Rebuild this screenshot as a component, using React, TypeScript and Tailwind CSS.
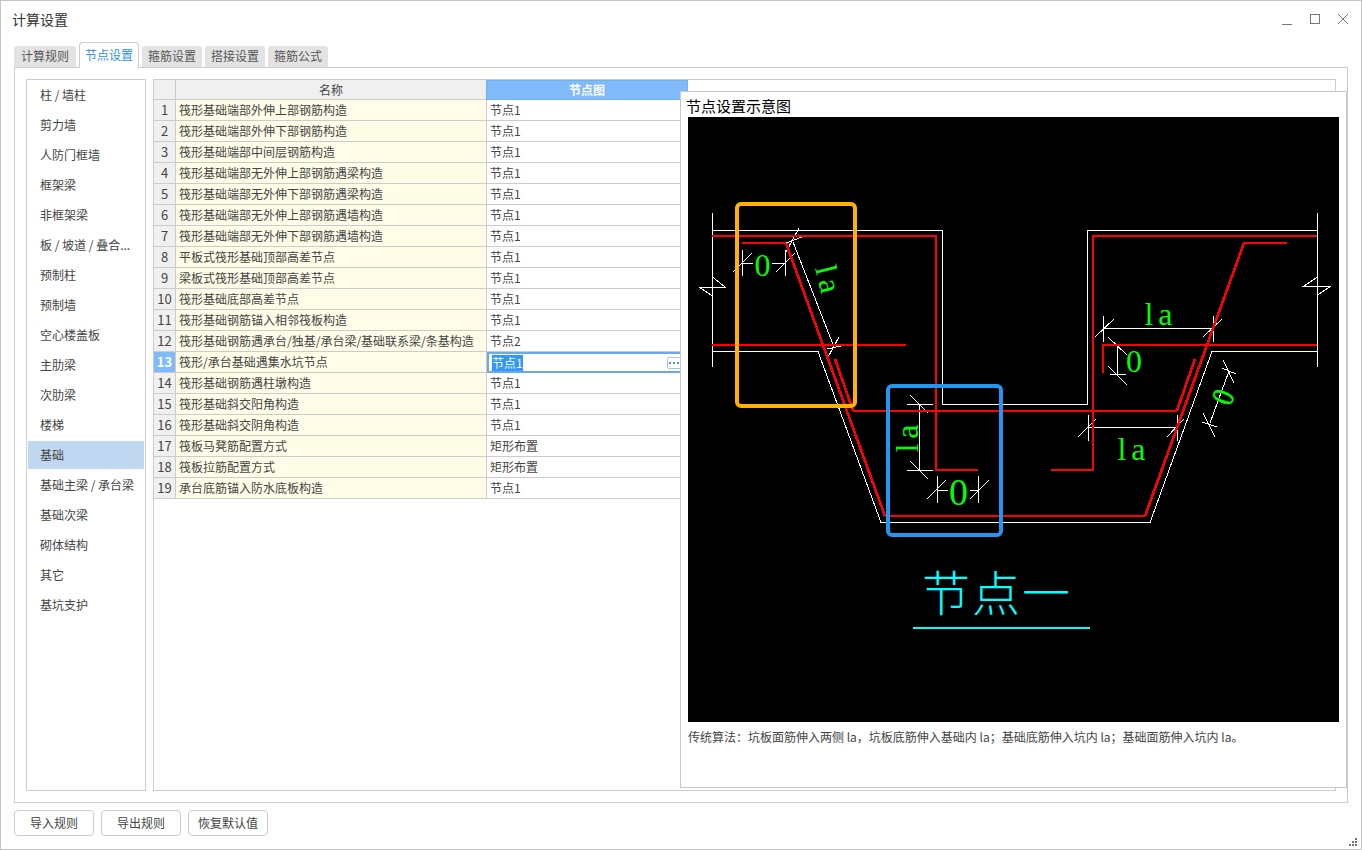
import React from 'react';

const categories = [
  '柱 / 墙柱', '剪力墙', '人防门框墙', '框架梁', '非框架梁', '板 / 坡道 / 叠合...', '预制柱', '预制墙', '空心楼盖板', '主肋梁',
  '次肋梁', '楼梯', '基础', '基础主梁 / 承台梁', '基础次梁', '砌体结构', '其它', '基坑支护',
];

const rows = [
  ['筏形基础端部外伸上部钢筋构造', '节点1'],
  ['筏形基础端部外伸下部钢筋构造', '节点1'],
  ['筏形基础端部中间层钢筋构造', '节点1'],
  ['筏形基础端部无外伸上部钢筋遇梁构造', '节点1'],
  ['筏形基础端部无外伸下部钢筋遇梁构造', '节点1'],
  ['筏形基础端部无外伸上部钢筋遇墙构造', '节点1'],
  ['筏形基础端部无外伸下部钢筋遇墙构造', '节点1'],
  ['平板式筏形基础顶部高差节点', '节点1'],
  ['梁板式筏形基础顶部高差节点', '节点1'],
  ['筏形基础底部高差节点', '节点1'],
  ['筏形基础钢筋锚入相邻筏板构造', '节点1'],
  ['筏形基础钢筋遇承台/独基/承台梁/基础联系梁/条基构造', '节点2'],
  ['筏形/承台基础遇集水坑节点', '节点1'],
  ['筏形基础钢筋遇柱墩构造', '节点1'],
  ['筏形基础斜交阳角构造', '节点1'],
  ['筏形基础斜交阴角构造', '节点1'],
  ['筏板马凳筋配置方式', '矩形布置'],
  ['筏板拉筋配置方式', '矩形布置'],
  ['承台底筋锚入防水底板构造', '节点1'],
];

const tabs = ['计算规则', '节点设置', '箍筋设置', '搭接设置', '箍筋公式'];

// 白色轮廓线
const whiteLines = [
  '712.5,213 712.5,367',
  '712.5,230.5 942.5,230.5 942.5,404.5 1087.5,404.5 1087.5,230.5 1317.5,230.5',
  '1317.5,213 1317.5,367',
  '712.5,277 725,287 699,287 712.5,296',
  '1317.5,277 1304,286 1331,286 1317.5,295',
  '712.5,351.5 818,351.5 881,522.5 1150,522.5 1212,351.5 1317.5,351.5',
  '793,242 834,347',
  // 标注线
  '742.5,250 742.5,276', '733,272 752,253', '742.5,263.5 753,263.5',
  '785.5,250 785.5,276', '776,272 795,253', '772,263.5 785.5,263.5',
  '799,228 786,252', '786,243 802,237', '839,337 827,359', '827,349 841,346',
  '907,404.5 933,404.5', '910,395 928,413', '919.5,404.5 919.5,470.5', '907,470.5 933,470.5', '910,461 928,479',
  '937.5,476 937.5,503', '927,499 946,480', '937.5,490.5 948,490.5',
  '978.5,476 978.5,503', '970,499 989,480', '970,490.5 978.5,490.5',
  '1103.5,316 1103.5,342', '1095,337 1114,319', '1103.5,328.5 1213.5,328.5', '1213.5,316 1213.5,342', '1203,337 1222,319',
  '1117.5,345 1117.5,374.5', '1108,337 1127,355', '1108,366 1127,385', '1110,374.5 1126,374.5',
  '1088.5,415 1088.5,441', '1078,437 1096,419', '1088.5,427.5 1177.5,427.5', '1177.5,415 1177.5,441', '1167,437 1184,419',
  '1210,423 1229,371', '1223,360 1234,383', '1222,368 1236,374', '1203,413 1215,437', '1202,422 1217,427',
];

// 红色钢筋线
const redLines = [
  '712,236 936,236 936,469.5 977.5,469.5',
  '742,243 786,243', '885,516 1145,516', '1244,243 1287,243',
  '712,345 906,345',
  '853,410.5 1177,410.5',
  '1051,469.5 1093,469.5 1093,236 1317,236',
  '1103,373 1103,345 1317,345',
];

const redSlants = ['786,243 885,516', '1145,516 1244,243', '835,359 853,410.5', '1177,410.5 1195,359'];

type DimProps = { x: number; y: number; size: number; rotate?: number; spacing?: number; children: string };

const DimText = ({ x, y, size, rotate, spacing, children }: DimProps) => (
  <text
    x={x}
    y={y}
    fontSize={size}
    letterSpacing={spacing}
    fill="#00ff00"
    textAnchor="middle"
    transform={rotate ? `rotate(${rotate} ${x} ${y})` : undefined}
    className="font-['Liberation_Serif',serif]"
  >
    {children}
  </text>
);

const NodeDiagram = () => (
  <svg viewBox="688 117 651 605" className="block h-[605px] w-[651px] bg-black">
    <g fill="none" stroke="#ffffff" strokeWidth="1" shapeRendering="crispEdges">
      {whiteLines.map((p) => (
        <polyline key={p} points={p} />
      ))}
    </g>
    <g fill="none" stroke="#ff0000" strokeWidth="2" shapeRendering="crispEdges">
      {redLines.map((p) => (
        <polyline key={p} points={p} />
      ))}
    </g>
    <g fill="none" stroke="#ff0000" strokeWidth="2.6" shapeRendering="crispEdges">
      {redSlants.map((p) => (
        <polyline key={p} points={p} />
      ))}
    </g>
    <DimText x={762.5} y={276} size={32}>0</DimText>
    <text
      fontSize={31}
      letterSpacing={5}
      fill="#00ff00"
      transform="translate(815 268) rotate(76)"
      className="font-['Liberation_Serif',serif]"
    >
      la
    </text>
    <DimText x={918} y={436} size={32} rotate={-90} spacing={5}>la</DimText>
    <DimText x={958.5} y={505} size={38}>0</DimText>
    <DimText x={1161} y={325} size={32} spacing={5}>la</DimText>
    <DimText x={1134} y={372} size={32}>0</DimText>
    <DimText x={1134} y={460} size={32} spacing={5}>la</DimText>
    <text
      y={10.5}
      fontSize={31}
      fill="#00ff00"
      stroke="#00ff00"
      strokeWidth="0.5"
      textAnchor="middle"
      transform="translate(1223 397) rotate(-68) scale(0.85 1)"
      className="font-['Liberation_Serif',serif]"
    >
      0
    </text>
    <rect x="737" y="204" width="118" height="202" rx="4" fill="none" stroke="#ffb300" strokeWidth="4" />
    <rect x="888" y="386" width="113" height="149" rx="4" fill="none" stroke="#2196f3" strokeWidth="4" />
    <text
      x="997"
      y="611"
      fontSize="48"
      letterSpacing="2"
      fill="#00ffff"
      textAnchor="middle"
      className="font-['Noto_Sans_CJK_SC',sans-serif] font-light"
    >
      节点一
    </text>
    <rect x="913" y="627" width="177" height="2" fill="#00ffff" />
  </svg>
);

const WindowControls = () => (
  <div className="flex items-center gap-[18px] pr-[13px] text-[#777777]">
    <svg width="10" height="12" viewBox="0 0 10 12" fill="none" stroke="currentColor">
      <path d="M0 11.5H10" />
    </svg>
    <svg width="10" height="10" viewBox="0 0 10 10" fill="none" stroke="currentColor">
      <rect x="0.5" y="0.5" width="9" height="9" />
    </svg>
    <svg width="10" height="10" viewBox="0 0 10 10" fill="none" stroke="currentColor">
      <path d="M0 0L10 10M10 0L0 10" />
    </svg>
  </div>
);

const App = () => {
  return (
    <div className="relative flex h-[850px] w-[1362px] flex-col overflow-hidden border border-[#c4c4c4] bg-white font-['Noto_Sans_CJK_SC',sans-serif] text-xs text-[#444444]">
      <div className="flex h-[35px] items-center justify-between pl-[11px]">
        <span className="text-sm leading-none text-[#333333]">计算设置</span>
        <WindowControls />
      </div>

      <div className="ml-[13px] mt-[6px] flex h-[25px] items-end gap-[3px]">
        {tabs.map((t, i) =>
          i === 1 ? (
            <div
              key={t}
              className="relative z-10 -mb-px flex h-[26px] w-[60px] items-center justify-center rounded-t-[4px] border border-b-0 border-[#cccccc] bg-white pb-[2px] text-[#2f8fe6]"
            >
              {t}
            </div>
          ) : (
            <div
              key={t}
              className={`flex h-[21px] items-center justify-center rounded-t-[3px] bg-[#e3e3e3] pb-[2px] text-[#555555] ${i === 0 ? 'w-[62px]' : 'w-[60px]'}`}
            >
              {t}
            </div>
          ),
        )}
      </div>

      <div className="ml-[13px] flex h-[736px] w-[1334px] gap-[7px] border border-[#cccccc] p-[11px]">
        <div className="w-[120px] border border-[#cccccc] p-px">
          {categories.map((c) => (
            <div
              key={c}
              className={`mb-[2px] flex h-[28px] items-center whitespace-nowrap pl-[12px] ${c === '基础' ? 'bg-[#bfd7f0]' : ''}`}
            >
              {c}
            </div>
          ))}
        </div>

        <div className="w-[1183px] border border-[#cccccc]">
          <div className="flex h-[20px] w-[534px] leading-none">
            <div className="w-[22px] border-b border-r border-[#cccccc] bg-[#f0f0f0]" />
            <div className="flex w-[310px] items-center justify-center border-b border-[#cccccc] bg-[#f0f0f0]">名称</div>
            <div className="flex w-[202px] items-center justify-center border border-[#6fb0f5] bg-[#80bafb] font-bold text-white">节点图</div>
          </div>
          {rows.map(([name, node], i) => {
            const active = i === 12;
            return (
              <div key={i} className="flex h-[21px] w-[534px]">
                <div
                  className={`flex w-[22px] items-center justify-center border-b border-r border-[#cccccc] text-[13px] ${active ? 'bg-[#80bafb] font-bold text-white' : 'bg-[#f0f0f0]'}`}
                >
                  {i + 1}
                </div>
                <div className="flex w-[311px] items-center whitespace-nowrap border-b border-r border-[#cccccc] bg-[#fffde8] pl-[3px]">
                  {name}
                </div>
                {active ? (
                  <div className="flex w-[201px] items-center border-2 border-[#6aa9ee] bg-white pl-[3px] pr-px">
                    <span className="bg-[#3297fd] leading-[16px] text-white">{node}</span>
                    <div className="ml-auto flex h-[12px] w-[18px] items-center gap-[2px] rounded-[2px] border border-[#9cc6f5] pl-px">
                      <i className="h-[2px] w-[2px] bg-[#4a90e2]" />
                      <i className="h-[2px] w-[2px] bg-[#4a90e2]" />
                      <i className="h-[2px] w-[2px] bg-[#4a90e2]" />
                    </div>
                  </div>
                ) : (
                  <div className="flex w-[201px] items-center border-b border-r border-[#cccccc] bg-white pl-[3px]">{node}</div>
                )}
              </div>
            );
          })}
        </div>
      </div>

      <div className="ml-[13px] mt-[7px] flex gap-[7px]">
        {['导入规则', '导出规则', '恢复默认值'].map((b) => (
          <button key={b} className="h-[26px] w-[80px] rounded-[4px] border border-[#cccccc] bg-white text-[#444444]">
            {b}
          </button>
        ))}
      </div>

      {/* 示意图浮层 */}
      <div className="absolute left-[679px] top-[90px] h-[697px] w-[667px] border border-[#c8c8c8] bg-white pl-[7px]">
        <div className="ml-[-2px] flex h-[25px] items-center pt-[2px] text-[15px] leading-none text-black">节点设置示意图</div>
        <NodeDiagram />
        <div className="mt-[7px] leading-[16px] text-[#444444]">
          传统算法：坑板面筋伸入两侧 la，坑板底筋伸入基础内 la；基础底筋伸入坑内 la；基础面筋伸入坑内 la。
        </div>
      </div>

      <svg width="9" height="9" viewBox="0 0 9 9" className="absolute bottom-[2px] right-[3px] fill-[#777777]">
        <rect x="6" y="0" width="2" height="2" />
        <rect x="3" y="3" width="2" height="2" />
        <rect x="6" y="3" width="2" height="2" />
        <rect x="0" y="6" width="2" height="2" />
        <rect x="3" y="6" width="2" height="2" />
        <rect x="6" y="6" width="2" height="2" />
      </svg>
    </div>
  );
};

export default App;
